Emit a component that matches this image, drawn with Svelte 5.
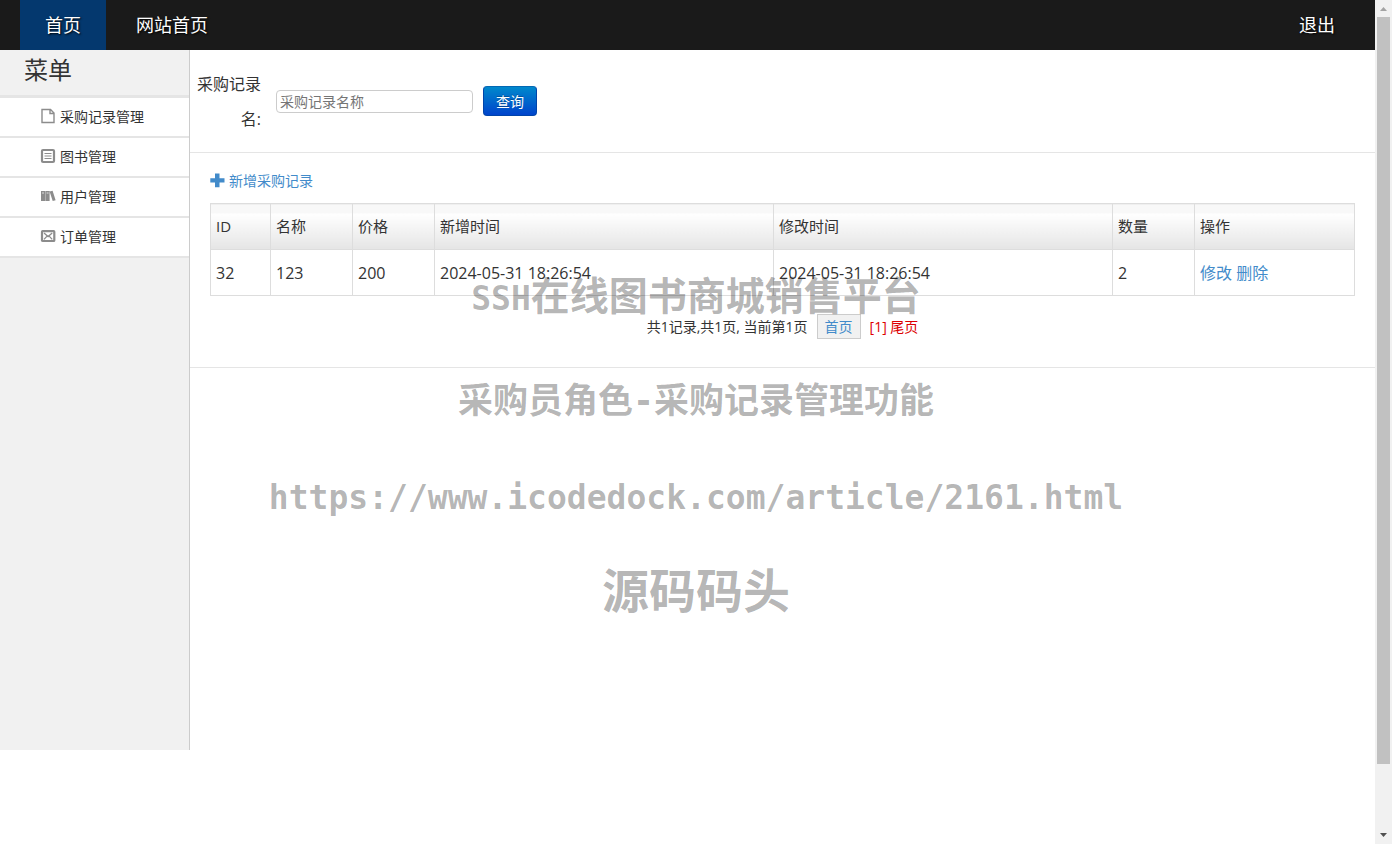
<script lang="ts">
	const menu = [
		{ icon: 'file', label: '采购记录管理' },
		{ icon: 'list', label: '图书管理' },
		{ icon: 'books', label: '用户管理' },
		{ icon: 'mail', label: '订单管理' }
	];

	const records = [
		{
			id: 32,
			name: '123',
			price: 200,
			created: '2024-05-31 18:26:54',
			updated: '2024-05-31 18:26:54',
			count: 2
		}
	];

	let keyword = $state('');
</script>

<div class="frame">
	<div class="page">
		<header>
			<nav>
				<a class="active" href="#home">首页</a>
				<a href="#site">网站首页</a>
			</nav>
			<a href="#logout">退出</a>
		</header>

		<div class="body">
			<aside>
				<h2>菜单</h2>
				<ul>
					{#each menu as item}
						<li>
							<a href="#{item.icon}">
								<svg viewBox="0 0 16 16" width="16" height="16" aria-hidden="true">
									{#if item.icon === 'file'}
										<path d="M2 1.500h8.500l3.500 3.500v9.500h-12z M10 1.500v4h4" fill="none" stroke="#8c8c8c" stroke-width="1.4" />
									{:else if item.icon === 'list'}
										<rect x="2" y="2" width="12" height="12" rx="1" fill="none" stroke="#8c8c8c" stroke-width="2.2" />
										<path d="M4.500 5.500h7M4.500 8h7M4.500 10.500h7" stroke="#8c8c8c" stroke-width="1.2" />
									{:else if item.icon === 'books'}
										<path d="M1 3h4.300v10H1z M5.600 3h4v10h-4z M9.600 3.600l3-.8 3 9.400-2.900.9z" fill="#8c8c8c" />
										<path d="M2 5h2M6.600 5h2" stroke="#ddd" />
									{:else}
										<rect x="2" y="3.200" width="12.300" height="9.800" rx=".6" fill="none" stroke="#8c8c8c" stroke-width="2.2" />
										<path d="M4 5l4.100 3.600L12.200 5M4 11.400l2.800-3M12.200 11.400l-2.800-3" fill="none" stroke="#8c8c8c" stroke-width="1.300" />
									{/if}
								</svg>
								{item.label}
							</a>
						</li>
					{/each}
				</ul>
			</aside>

			<main>
				<form class="search" onsubmit={(e) => e.preventDefault()}>
					<label for="keyword">采购记录名:</label>
					<input id="keyword" type="text" placeholder="采购记录名称" bind:value={keyword} />
					<button type="submit">查询</button>
				</form>

				<section>
					<a class="add" href="#add">
						<svg viewBox="0 0 15 15" width="15" height="15" aria-hidden="true">
							<path d="M5 0.5h4.5v4.7h5v4.3h-5v4.8H5V9.500H.3V5.200H5z" fill="#428bca" />
						</svg>
						新增采购记录
					</a>

					<table>
						<colgroup>
							<col class="id" />
							<col class="short" />
							<col class="short" />
							<col />
							<col />
							<col class="short" />
							<col class="actions" />
						</colgroup>
						<thead>
							<tr>
								<th>ID</th>
								<th>名称</th>
								<th>价格</th>
								<th>新增时间</th>
								<th>修改时间</th>
								<th>数量</th>
								<th>操作</th>
							</tr>
						</thead>
						<tbody>
							{#each records as r}
								<tr>
									<td>{r.id}</td>
									<td>{r.name}</td>
									<td>{r.price}</td>
									<td>{r.created}</td>
									<td>{r.updated}</td>
									<td>{r.count}</td>
									<td><a href="#edit">修改</a> <a href="#delete">删除</a></td>
								</tr>
							{/each}
						</tbody>
					</table>

					<div class="pager">
						<span>共1记录,共1页, 当前第1页</span>
						<a href="#first">首页</a>
						<span class="current">[1] 尾页</span>
					</div>
				</section>
			</main>
		</div>
	</div>

	<div class="scrollbar">
		<svg viewBox="0 0 17 17" width="17" height="17" aria-hidden="true">
			<path d="M5 11h7L8.500 7z" fill="#a3a3a3" />
		</svg>
		<div class="thumb"></div>
		<svg viewBox="0 0 17 17" width="17" height="17" aria-hidden="true">
			<path d="M5 6h7l-3.500 4z" fill="#505050" />
		</svg>
	</div>

	<div class="watermark">
		<p class="title"><span>SSH</span>在线图书商城销售平台</p>
		<p class="role">采购员角色-采购记录管理功能</p>
		<p class="url">https://www.icodedock.com/article/2161.html</p>
		<p class="brand">源码码头</p>
	</div>
</div>

<style>
	:global(body) {
		margin: 0;
		background: #fff;
		color: #333;
		font-family: 'Open Sans', 'Noto Sans CJK SC', sans-serif;
	}
	a {
		color: #428bca;
		text-decoration: none;
	}
	.frame {
		display: flex;
		position: relative;
		min-height: 100vh;
	}
	.page {
		flex: 1;
		min-width: 0;
	}

	header {
		display: flex;
		justify-content: space-between;
		padding: 0 15px 0 20px;
		background: #1a1a1a;
	}
	nav {
		display: flex;
		gap: 5px;
	}
	header a {
		padding: 0 25px;
		color: #fff;
		font-size: 18px;
		line-height: 50px;
		text-shadow: 1px 1px 2px #000;
	}
	header a.active {
		background: #04386e;
	}

	.body {
		display: flex;
		align-items: flex-start;
	}
	aside {
		box-sizing: border-box;
		width: 190px;
		min-height: 700px;
		border-right: 1px solid #ccc;
		background: #f1f1f1;
	}
	h2 {
		margin: 0;
		padding: 0 24px 5px;
		border-bottom: 3px solid #e5e5e5;
		font-size: 24px;
		font-weight: 400;
		line-height: 40px;
	}
	ul {
		margin: 0;
		padding: 0;
		list-style: none;
	}
	li {
		border-bottom: 2px solid #e5e5e5;
		background: #fff;
	}
	li a {
		display: flex;
		align-items: center;
		gap: 4px;
		padding-left: 40px;
		color: #333;
		font-size: 14px;
		line-height: 38px;
	}
	li svg,
	.add svg {
		margin-bottom: 2px;
	}

	main {
		flex: 1;
		min-width: 0;
	}
	.search {
		display: flex;
		align-items: center;
		padding: 17px 0 15px;
		border-bottom: 1px solid #e5e5e5;
	}
	label {
		width: 71px;
		margin-right: 15px;
		font-size: 16px;
		line-height: 35px;
		text-align: right;
	}
	input,
	button {
		margin: 0 0 2px;
		font: 14px 'Open Sans', 'Noto Sans CJK SC', sans-serif;
	}
	input {
		box-sizing: border-box;
		width: 197px;
		height: 23px;
		margin-right: 10px;
		padding: 0 3px;
		border: 1px solid #ccc;
		border-radius: 4px;
	}
	input::placeholder {
		color: #757575;
	}
	button {
		height: 30px;
		padding: 0 12px;
		border: 1px solid #04a;
		border-top-color: #0368b4;
		border-radius: 4px;
		background: linear-gradient(#08c, #04c);
		color: #fff;
		text-shadow: 0 -1px 0 rgba(0, 0, 0, 0.25);
	}

	section {
		padding: 17px 20px 28px;
		border-bottom: 1px solid #e5e5e5;
	}
	.add {
		display: inline-flex;
		align-items: center;
		gap: 4px;
		margin-bottom: 11px;
		font-size: 14px;
		line-height: 22px;
		vertical-align: top;
	}
	table {
		width: 100%;
		border-collapse: collapse;
		table-layout: fixed;
	}
	.id {
		width: 60px;
	}
	.short {
		width: 82px;
	}
	.actions {
		width: 160px;
	}
	th,
	td {
		padding: 0 5px;
		border: 1px solid #ddd;
		font-size: 16px;
		line-height: 45px;
		text-align: left;
	}
	td {
		padding-top: 1px;
		line-height: 44px;
	}
	th {
		background: linear-gradient(#f8f8f8 9px, #fff 9px, #e5e5e5);
		font-size: 15px;
		font-weight: 400;
	}
	.pager {
		display: flex;
		align-items: center;
		justify-content: center;
		gap: 9px;
		margin-top: 18px;
		font-size: 14px;
		line-height: 23px;
	}
	.pager a {
		padding: 0 7px;
		border: 1px solid #ccc;
		background: #f1f1f1;
	}
	.current {
		color: #d00;
	}

	.scrollbar {
		display: flex;
		flex-direction: column;
		width: 17px;
		height: 100vh;
		background: #f1f1f1;
	}
	.thumb {
		height: 747px;
		margin: 0 2px auto;
		background: #c1c1c1;
	}

	.watermark {
		position: absolute;
		top: 273px;
		right: 0;
		left: 0;
		color: rgba(0, 0, 0, 0.3);
		font-family: 'DejaVu Sans Mono', 'Noto Sans CJK SC', monospace;
		font-weight: 700;
		text-align: center;
		white-space: nowrap;
		pointer-events: none;
	}
	.watermark p {
		margin: 0 0 53px;
	}
	.title {
		font-size: 39px;
		line-height: 48px;
	}
	.title span {
		font-size: 33px;
	}
	.role {
		font-size: 35px;
		line-height: 50px;
	}
	.url {
		font-size: 33px;
		line-height: 38px;
	}
	.watermark .brand {
		margin: 0;
		font-size: 47px;
		line-height: 44px;
	}
</style>
